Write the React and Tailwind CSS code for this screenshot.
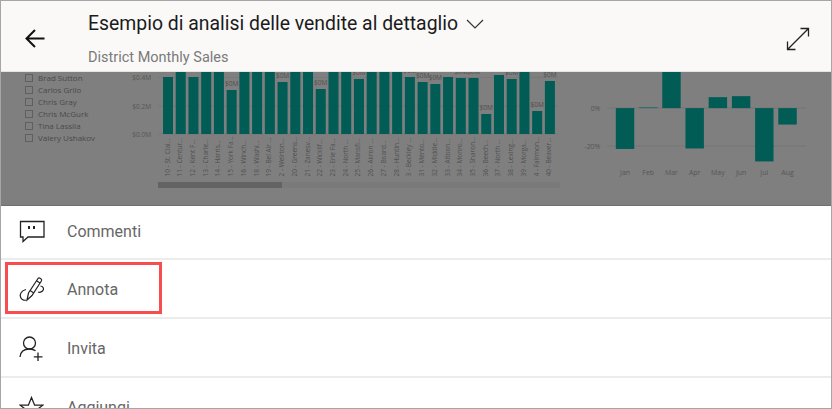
const people = ['Brad Sutton', 'Carlos Grilo', 'Chris Gray', 'Chris McGurk', 'Tina Lassila', 'Valery Ushakov'];

const stores = [
    ['10 - St. Clai...', 77], ['11 - Centur...', 70], ['12 - Kent F...', 77], ['13 - Charle...', 70],
    ['14 - Harris...', 70], ['15 - York Fa...', 90, true], ['16 - Winch...', 70], ['18 - Washi...', 70],
    ['19 - Bel Air ...', 70], ['2 - Weirton...', 82, true], ['20 - Greens...', 70], ['21 - Zanesv...', 70],
    ['22 - Wicklif...', 89, true], ['23 - Erie Fa...', 70], ['24 - North ...', 70], ['25 - Mansfi...', 79, true],
    ['26 - Akron ...', 70], ['27 - Board...', 70], ['28 - Huntin...', 70], ['3 - Beckley ...', 77, true],
    ['31 - Mento...', 82, true], ['32 - Middle...', 84, true], ['33 - Altoon...', 77], ['34 - Monro...', 78, true],
    ['35 - Sharon...', 78, true], ['36 - Beech...', 114, true], ['37 - North ...', 75], ['38 - Lexing...', 79, true],
    ['39 - Morga...', 70], ['4 - Fairmon...', 111, true], ['40 - Beaver...', 81, true],
];

const months = [
    ['Jan', 108, 149], ['Feb', 107, 108], ['Mar', 70, 108], ['Apr', 108, 148.5],
    ['May', 97, 108], ['Jun', 96, 108], ['Jul', 108, 161.5], ['Aug', 108, 124.5],
];

const BarChart = () => (
    <svg viewBox="130 72 440 134" className="w-[440px] h-[134px] shrink-0" fontFamily="'Open Sans', sans-serif">
        {[['$0.4M', 77.5], ['$0.2M', 106], ['$0.0M', 134]].map(([label, y]) => (
            <g key={label}>
                <line x1="158" x2="558" y1={y} y2={y} stroke="#787878" strokeWidth="1" />
                <text x="151" y={y + 2.5} textAnchor="end" fontSize="6.5" fill="#565656">{label}</text>
            </g>
        ))}
        {stores.map(([name, top, showLabel], i) => {
            const x = 163 + i * 12.73;
            return (
                <g key={name}>
                    <rect x={x} y={top} width="10" height={134 - top} fill="#005c55" />
                    {showLabel && <text x={x + 5} y={top - 4} textAnchor="middle" fontSize="6.5" fill="#505050">$0M</text>}
                    <text
                        transform={`translate(${x + 6.5} 176.5) rotate(-90)`}
                        fontSize="6.5"
                        fill="#505050"
                    >
                        {name}
                    </text>
                </g>
            );
        })}
        <rect x="158" y="182" width="402" height="6" fill="#7a7a7a" />
        <rect x="158" y="182" width="124" height="6" fill="#636363" />
    </svg>
);

const MonthChart = () => (
    <svg viewBox="570 72 262 134" className="w-[261px] h-[134px] shrink-0" fontFamily="'Open Sans', sans-serif">
        {[['0%', 108], ['-20%', 146]].map(([label, y]) => (
            <g key={label}>
                <line x1="607" x2="807" y1={y} y2={y} stroke="#757575" strokeWidth="1" />
                <text x="600.5" y={y + 3} textAnchor="end" fontSize="7" fill="#565656">{label}</text>
            </g>
        ))}
        {months.map(([name, top, bottom], i) => {
            const x = 616 + i * 23.3;
            return (
                <g key={name}>
                    <rect x={x} y={top} width="18.5" height={bottom - top} fill={name === 'Feb' ? '#2f6d67' : '#005c55'} />
                    <text x={x + 9.25} y="175" textAnchor="middle" fontSize="7" fill="#565656">{name}</text>
                </g>
            );
        })}
    </svg>
);

const CommentIcon = () => (
    <svg width="26" height="24" viewBox="0 0 26 24" fill="none" stroke="#222" strokeWidth="1.3">
        <path d="M1.5 1.5H25V17H9L4 21.5V17H1.5Z" />
        <path d="M10 6v3M15 6v3" strokeWidth="2" />
    </svg>
);

const PenIcon = () => (
    <svg width="26" height="27" viewBox="0 0 26 27" fill="none" stroke="#222" strokeWidth="1.2">
        <path d="M8 24L9.5 17L19 2.5C20 1 23.5 3 22.5 4.8L13 19.5Z" />
        <path d="M17.5 4.8L21 7M11 14.5L14.5 16.8" />
        <path d="M7 13.5C2.5 14.5 0.5 18 1.5 21C2.2 23.5 5 24.8 7 24" />
        <path d="M21.5 10C24.5 10.5 25.5 13 23.5 15C22.5 16 20.5 16.5 19 16" />
    </svg>
);

const InviteIcon = () => (
    <svg width="25" height="26" viewBox="0 0 25 26" fill="none" stroke="#222" strokeWidth="1.3">
        <circle cx="10.5" cy="7" r="6" />
        <path d="M1 21C1.5 15.5 5 13 10.5 13C13 13 15 13.6 16.5 14.8" />
        <path d="M19 16.5V25M14.8 20.8H23.5" />
    </svg>
);

const StarIcon = () => (
    <svg width="25" height="24" viewBox="0 0 25 24" fill="none" stroke="#222" strokeWidth="1.3">
        <path d="M12.5 1.5L15.6 9.2H23.8L17.2 14.2L19.6 22.5L12.5 17.6L5.4 22.5L7.8 14.2L1.2 9.2H9.4Z" />
    </svg>
);

const Row = ({ icon, label, className }) => (
    <div className={`flex items-center border-b-2 border-[#ececec] pl-[18px] shrink-0 ${className}`}>
        <div className="w-[48px] flex items-center">{icon}</div>
        <span className="text-[16px] text-[#666666] font-['Roboto',sans-serif]">{label}</span>
    </div>
);

const App = () => {
    return (
        <div className="relative w-[832px] h-[409px] overflow-hidden bg-white border border-[#a6a6a6] flex flex-col font-['Open_Sans',sans-serif]">
            <header className="h-[71px] shrink-0 bg-[#faf9f8] flex items-start border-b border-[#e4e4e4]">
                <div className="w-[87px] shrink-0 pl-[24px] pt-[28px]">
                    <svg width="20" height="19" viewBox="0 0 20 19" fill="none" stroke="#111" strokeWidth="2">
                        <path d="M19.5 9.5H2M10 1L1.5 9.5L10 18" />
                    </svg>
                </div>
                <div className="flex-1 pt-[9px] font-['Roboto',sans-serif]">
                    <div className="flex items-center">
                        <h1 className="text-[19.4px] leading-[28px] text-[#1b1b1b]">Esempio di analisi delle vendite al dettaglio</h1>
                        <svg className="ml-[8px]" width="18" height="10" viewBox="0 0 18 10" fill="none" stroke="#333" strokeWidth="1.2">
                            <path d="M1 1L9 9L17 1" />
                        </svg>
                    </div>
                    <p className="mt-[11px] text-[14.5px] leading-[18px] text-[#7a7a7a]">District Monthly Sales</p>
                </div>
                <div className="pr-[21px] pt-[26px]">
                    <svg width="24" height="24" viewBox="0 0 24 24" fill="none" stroke="#222" strokeWidth="1.3">
                        <path d="M1.5 22.5L22.5 1.5M14.5 1.5H22.5V9.5M1.5 14.5V22.5H9.5" />
                    </svg>
                </div>
            </header>

            <section className="h-[134px] shrink-0 bg-[#7f7f7f] border-b border-[#6f6f6f] flex overflow-hidden">
                <ul className="w-[129px] shrink-0 pl-[24px]">
                    {people.map((name) => (
                        <li key={name} className="h-[12px] flex items-center gap-[5px] text-[8px] text-[#4a4a4a]">
                            <span className="w-[8px] h-[8px] border border-[#5f5f5f]" />
                            {name}
                        </li>
                    ))}
                </ul>
                <BarChart />
                <MonthChart />
            </section>

            <Row icon={<CommentIcon />} label="Commenti" className="h-[54px]" />
            <Row icon={<PenIcon />} label="Annota" className="h-[59px] pt-[2px]" />
            <Row icon={<InviteIcon />} label="Invita" className="h-[59px] pt-[2px]" />
            <Row icon={<StarIcon />} label="Aggiungi" className="h-[59px] pt-[2px]" />

            <div className="absolute left-[4px] top-[261px] w-[157px] h-[52px] border-[3px] border-[#f84d4f]" />
        </div>
    );
};

export default App;
